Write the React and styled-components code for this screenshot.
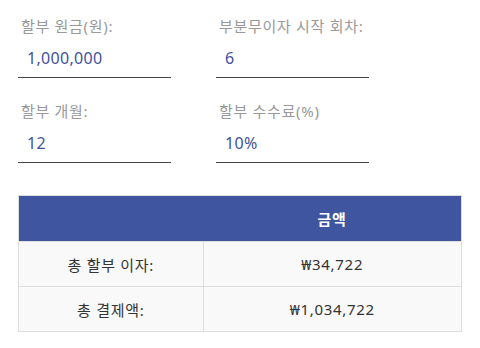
import React from "react";
import styled, { createGlobalStyle } from "styled-components";

const GlobalStyle = createGlobalStyle`
  body {
    margin: 0;
    background: #fff;
    font-family: "Noto Sans", "Noto Sans CJK KR", sans-serif;
  }
`;

const Page = styled.div`
  padding: 16px 18px 0 18px;
  width: 444px;
`;

const FieldGrid = styled.div`
  display: grid;
  grid-template-columns: 153px 153px;
  column-gap: 45px;
  row-gap: 23px;
`;

const Field = styled.div`
  display: flex;
  flex-direction: column;
`;

const Label = styled.label`
  font-size: 15px;
  line-height: 20px;
  letter-spacing: 0.7px;
  color: #999;
  padding-left: 3px;
  margin-bottom: 3px;
  white-space: nowrap;
`;

const Input = styled.input`
  box-sizing: border-box;
  height: 39px;
  width: 100%;
  border: none;
  border-bottom: 1px solid #444;
  outline: none;
  padding: 0 0 0 9px;
  font-family: "Noto Sans", "Noto Sans CJK KR", sans-serif;
  font-size: 16px;
  letter-spacing: 0.3px;
  color: #3f529c;
  background: transparent;
`;

const Table = styled.table`
  margin-top: 32px;
  width: 444px;
  border-collapse: collapse;
  border: 1px solid #ddd;
  font-size: 15px;
  letter-spacing: 0.7px;
  table-layout: fixed;
`;

const Th = styled.th`
  background: #3f55a0;
  color: #fff;
  font-weight: 700;
  height: 45px;
  padding: 0;
  text-align: center;
  width: ${p => p.$w || "auto"};
`;

const Td = styled.td`
  background: #f9f9f9;
  color: #333;
  height: 44px;
  padding: 0;
  text-align: center;
  border: 1px solid #ddd;
`;

const fields = [
  { label: "할부 원금(원):", value: "1,000,000" },
  { label: "부분무이자 시작 회차:", value: "6" },
  { label: "할부 개월:", value: "12" },
  { label: "할부 수수료(%)", value: "10%" },
];

const rows = [
  { name: "총 할부 이자:", amount: "₩34,722" },
  { name: "총 결제액:", amount: "₩1,034,722" },
];

export default function App() {
  return (
    <Page>
      <GlobalStyle />
      <FieldGrid>
        {fields.map(f => (
          <Field key={f.label}>
            <Label>{f.label}</Label>
            <Input type="text" defaultValue={f.value} />
          </Field>
        ))}
      </FieldGrid>
      <Table>
        <thead>
          <tr>
            <Th $w="184px"></Th>
            <Th>금액</Th>
          </tr>
        </thead>
        <tbody>
          {rows.map(r => (
            <tr key={r.name}>
              <Td>{r.name}</Td>
              <Td>{r.amount}</Td>
            </tr>
          ))}
        </tbody>
      </Table>
    </Page>
  );
}
